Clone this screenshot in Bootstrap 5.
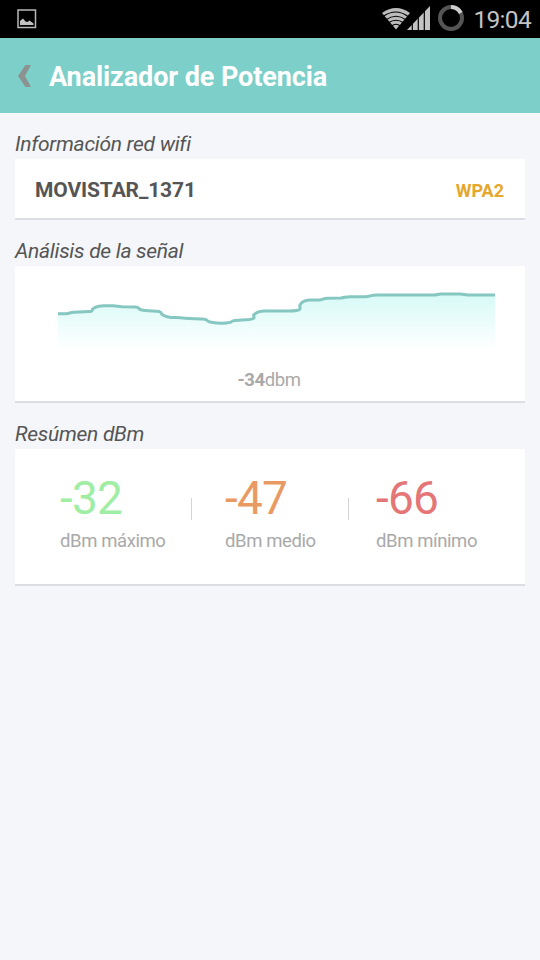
<!DOCTYPE html>
<html lang="es">
<head>
<meta charset="utf-8">
<meta name="viewport" content="width=device-width, initial-scale=1">
<title>Analizador de Potencia</title>
<link rel="stylesheet" href="https://cdn.jsdelivr.net/npm/bootstrap@5.3.0/dist/css/bootstrap.min.css">
<style>
body { background: #f4f6fa; font-family: Roboto, sans-serif; color: #555; min-height: 960px; }
svg { display: block; flex: none; }
.status-bar { height: 38px; background: #000; color: #c3c3c3; padding: 0 9px 0 17px; }
.clock { font-size: 24.5px; line-height: 38px; margin-left: 9px; padding-top: 2px; letter-spacing: -.7px; }
.app-bar { height: 75px; background: #7dcfc9; padding: 0 18px; }
.app-title { font-size: 27px; font-weight: 700; line-height: 75px; margin-left: 17px; padding-top: 4px; letter-spacing: -.1px; }
.content-area { padding: 0 15px; }
.section-label { height: 46px; font-size: 21px; font-style: italic; line-height: 24px; padding-top: 19px; margin: 0; font-weight: 400; letter-spacing: -.28px; }
.panel { background: #fff; border-bottom: 2px solid #dcdde3; }
.panel-net { height: 61px; padding: 3px 21px 0 20px; }
.panel-big { height: 137px; }
.ssid { font-size: 21px; font-weight: 700; letter-spacing: -.12px; padding-top: 1px; }
.security { font-size: 18px; font-weight: 700; color: #e5a62c; }
.soft { color: #a9a9a9; font-size: 18.5px; line-height: 22px; letter-spacing: -.4px; }
.chart { margin: 14px 0 0 43px; }
.reading { margin-top: 14px; padding-right: 2px; }
.stats { padding: 24px 0 0 45px; }
.figure-num { font-size: 46px; line-height: 50px; letter-spacing: -.8px; }
.caption-text { margin-top: 7px; }
.stat-1 { width: 131px; } .stat-2 { width: 123px; }
.divider { width: 1px; height: 22px; background: #d4d4d4; margin: 25px 33px 0 0; }
.divider-2 { margin-right: 27px; }
.green { color: #a0eda5; } .orange { color: #e99a63; } .red { color: #e57678; }
</style>
</head>
<body>
<div class="status-bar d-flex align-items-center">
  <svg width="20" height="20" viewBox="0 0 20 20"><rect x="1" y="1" width="17.5" height="17.5" fill="none" stroke="#b8b8b8" stroke-width="1.5"/><path d="M3 16v-4l3-2.5 2.5 3 2 .5 2-1.5 4 3V16z" fill="#c3c3c3"/></svg>
  <svg class="ms-auto" width="83" height="30" viewBox="381 4 83 30">
    <path d="M382 13Q396 3 410 13L396 29.5z" fill="#bcbcbc"/>
    <path d="M383 16.5Q396 7.5 408 16.5M386 19.7Q396 12.8 406 19.7M388.5 22.8Q396 17.6 403.5 22.8M391.5 26Q396 22.6 400.5 26" fill="none" stroke="#000" stroke-width="1.1"/>
    <path d="M407 30L430 6v24z" fill="#c3c3c3"/>
    <path d="M412.3 20v11M418.3 14v17M424.3 9v22" stroke="#000" stroke-width="1.2"/>
    <circle cx="451" cy="18" r="11" fill="none" stroke="#555" stroke-width="4"/>
    <path d="M451 7A11 11 0 0 1 460.8 13" fill="none" stroke="#cecece" stroke-width="4"/>
  </svg>
  <span class="clock">19:04</span>
</div>
<header class="app-bar d-flex align-items-center text-white">
  <svg width="14" height="22" viewBox="0 0 14 22"><path d="M7.5 0H13L7 11l6 11H7.5L0 11z" fill="#8b9290"/></svg>
  <h1 class="app-title mb-0">Analizador de Potencia</h1>
</header>
<main class="content-area">
  <h2 class="section-label">Información red wifi</h2>
  <section class="panel panel-net d-flex align-items-center justify-content-between">
    <span class="ssid">MOVISTAR_1371</span><span class="security">WPA2</span>
  </section>
  <h2 class="section-label">Análisis de la señal</h2>
  <section class="panel panel-big d-flex flex-column">
    <svg class="chart" width="437" height="75" viewBox="58 280 437 75">
      <defs><linearGradient id="fade" gradientUnits="userSpaceOnUse" x1="0" y1="294" x2="0" y2="350"><stop offset="0" stop-color="#d7faf7"/><stop offset="1" stop-color="#fff"/></linearGradient></defs>
      <path fill="url(#fade)" d="M58 313.8H66C70 313.4 70 312.4 74 312.3L89 311.6C94 311.4 91 309.8 93 308.8C96 306.6 99 305.8 104 305.8H113L122 306.8L135 307.1C140 307.2 138 309 141 309.8C147 311.4 155 310.6 159 311.5C163 312.5 160 314 163 315C167 317.6 170 317.7 176 317.6C185 318 190 319 202 319.1C209 319.2 205 321 210 322C217 323.3 225 323.6 230 322.4C233 321.7 230 320.9 235 320.4L249 319.5C258 318.6 252 316 254 314.6C257 312 260 311 264 311H290C303 310.5 300 308.5 299.7 305.5C301 302.5 305 300.2 310 300H320C324 299.5 322 298.6 328 298.3L341 297.9C346 297.3 345 296.8 350 296.8H365C371 296.3 370 295 377 295H434C438 294.8 437 294 441 294H460C464 294.2 466 295 471 295H495V355H58Z"/>
      <path fill="none" stroke="#86c8c1" stroke-width="3" d="M58 313.8H66C70 313.4 70 312.4 74 312.3L89 311.6C94 311.4 91 309.8 93 308.8C96 306.6 99 305.8 104 305.8H113L122 306.8L135 307.1C140 307.2 138 309 141 309.8C147 311.4 155 310.6 159 311.5C163 312.5 160 314 163 315C167 317.6 170 317.7 176 317.6C185 318 190 319 202 319.1C209 319.2 205 321 210 322C217 323.3 225 323.6 230 322.4C233 321.7 230 320.9 235 320.4L249 319.5C258 318.6 252 316 254 314.6C257 312 260 311 264 311H290C303 310.5 300 308.5 299.7 305.5C301 302.5 305 300.2 310 300H320C324 299.5 322 298.6 328 298.3L341 297.9C346 297.3 345 296.8 350 296.8H365C371 296.3 370 295 377 295H434C438 294.8 437 294 441 294H460C464 294.2 466 295 471 295H495"/>
    </svg>
    <div class="reading soft text-center"><b>-34</b>dbm</div>
  </section>
  <h2 class="section-label">Resúmen dBm</h2>
  <section class="panel panel-big stats d-flex">
    <div class="stat-1"><div class="figure-num green">-32</div><div class="soft caption-text">dBm máximo</div></div>
    <div class="divider"></div>
    <div class="stat-2"><div class="figure-num orange">-47</div><div class="soft caption-text">dBm medio</div></div>
    <div class="divider divider-2"></div>
    <div><div class="figure-num red">-66</div><div class="soft caption-text">dBm mínimo</div></div>
  </section>
</main>
<script src="https://cdn.jsdelivr.net/npm/bootstrap@5.3.0/dist/js/bootstrap.bundle.min.js"></script>
</body>
</html>
